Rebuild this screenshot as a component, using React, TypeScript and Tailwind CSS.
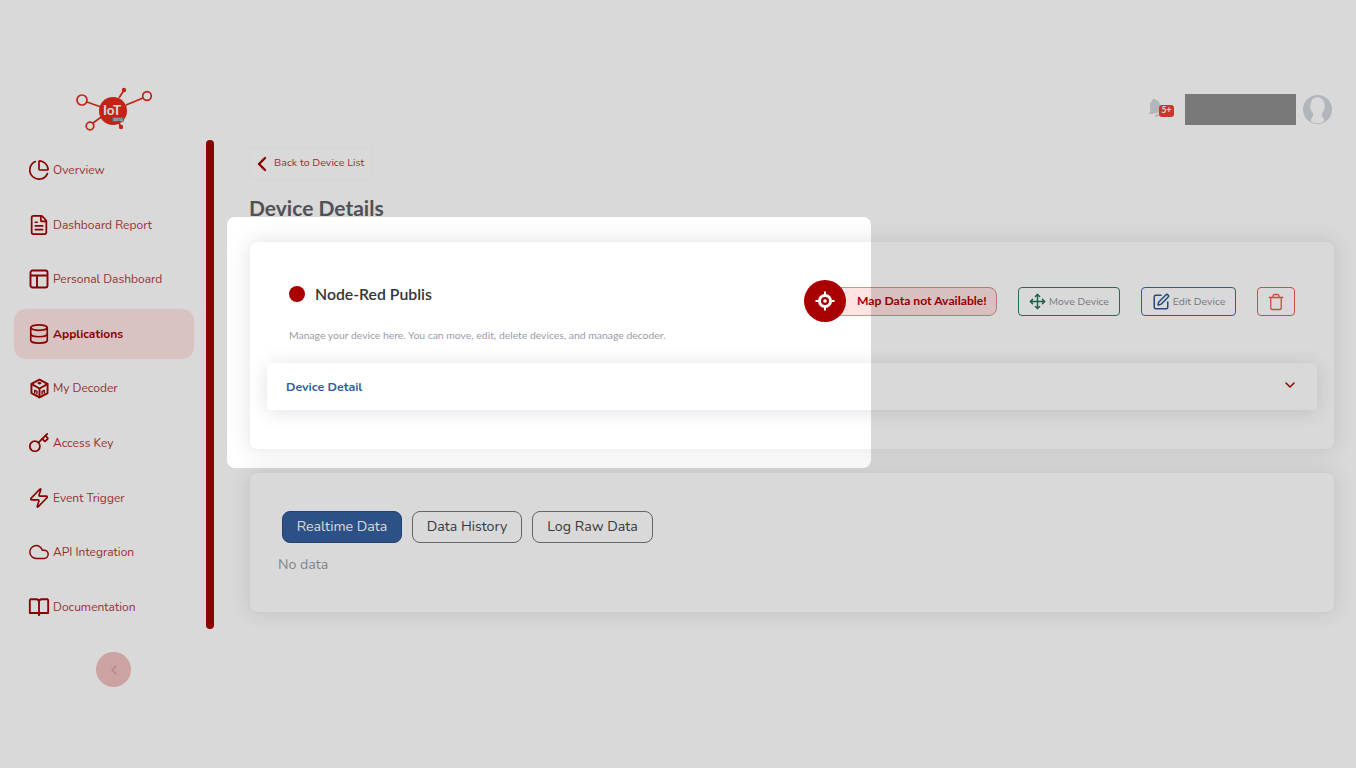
import React from "react";
import { ChevronLeft, ChevronDown, PieChart, FileText, Database, Key, Zap, Cloud, Move, SquarePen, Trash } from "lucide-react";

const nunito = "font-['Nunito','Lato','Noto_Sans',sans-serif]";

function PanelIcon() {
  return (
    <svg width="20" height="20" viewBox="0 0 20 20" fill="none" stroke="currentColor" strokeWidth="1.9">
      <rect x="1.5" y="1.5" width="17" height="17" rx="2" />
      <path d="M1.5 6.5h17M8 6.5v12" />
    </svg>
  );
}

function CubeIcon() {
  return (
    <svg width="21" height="21" viewBox="0 0 24 24" fill="none" stroke="currentColor" strokeWidth="2.2" strokeLinejoin="round" strokeLinecap="round">
      <path d="M12 1.800l9.200 5v10.400l-9.200 5-9.200-5V6.800z" />
      <path d="M3 7l9 5 9-5M12 12v9.800" />
      <path d="M10.500 5.800l1.500-.8 1.500.8-1.500.8z" strokeWidth="1.600" />
      <path d="M6.500 17v-3l2.500 1.400v3M15 18.400v-3l2.500-1.400v3" strokeWidth="1.600" />
    </svg>
  );
}

function BookIcon() {
  return (
    <svg width="22" height="22" viewBox="0 0 24 24" fill="none" stroke="currentColor" strokeWidth="2" strokeLinejoin="round">
      <path d="M2 3.500h7a3 3 0 0 1 3 3v15M22 3.500h-7a3 3 0 0 0-3 3" />
      <path d="M2 3.500v15h8a2 2 0 0 1 2 2 2 2 0 0 1 2-2h8v-15" />
    </svg>
  );
}

const items: { label: string; icon: React.ReactNode; active?: boolean }[] = [
  { label: "Overview", icon: <PieChart size={24} strokeWidth={1.8} /> },
  { label: "Dashboard Report", icon: <FileText size={24} strokeWidth={1.9} /> },
  { label: "Personal Dashboard", icon: <PanelIcon /> },
  { label: "Applications", icon: <Database size={24} strokeWidth={1.8} />, active: true },
  { label: "My Decoder", icon: <CubeIcon /> },
  { label: "Access Key", icon: <Key size={24} strokeWidth={1.9} /> },
  { label: "Event Trigger", icon: <Zap size={24} strokeWidth={1.8} /> },
  { label: "API Integration", icon: <Cloud size={26} strokeWidth={1.6} /> },
  { label: "Documentation", icon: <BookIcon /> },
];

function Logo() {
  return (
    <svg width="80" height="48" viewBox="0 0 80 48" fill="none">
      <g stroke="#e62a1a" strokeWidth="1.7">
        <circle cx="7" cy="15" r="5" />
        <circle cx="72" cy="11" r="4.300" />
        <circle cx="15" cy="41" r="3.800" />
        <path d="M12 17l14 5M51 20l17-7M18 38l11-8M44 13l5-8M44 38l2 4" />
      </g>
      <circle cx="49" cy="5" r="2.200" fill="#e62a1a" />
      <circle cx="46" cy="42" r="2.200" fill="#e62a1a" />
      <circle cx="38" cy="26" r="14" fill="#e62a1a" />
      <text x="37" y="29.500" textAnchor="middle" fill="#fff" fontSize="13.500" fontWeight="700" fontFamily="Lato, sans-serif">IoT</text>
      <rect x="37" y="32" width="12" height="4.500" fill="#777" />
      <text x="43" y="35.800" textAnchor="middle" fill="#ddd" fontSize="3.600" fontWeight="700" fontFamily="Lato, sans-serif">BETA</text>
    </svg>
  );
}

function Avatar() {
  return (
    <svg width="29" height="29" viewBox="0 0 30 30">
      <circle cx="15" cy="15" r="15" fill="#d0d5dd" />
      <ellipse cx="15" cy="11.500" rx="7.500" ry="9.500" fill="#fff" />
      <path d="M10 19c.8 2 .5 3.500-1 4.500l-1 3.500c4 3 10 3 14 0l-1-3.500c-1.500-1-1.800-2.500-1-4.500z" fill="#fff" />
    </svg>
  );
}

export default function App() {
  return (
    <div className={`relative flex w-[1356px] h-[768px] overflow-hidden bg-white ${nunito}`}>
      <aside className="w-[214px] shrink-0 pt-[85px] flex flex-col">
        <div className="h-[55px] pl-[75px]"><Logo /></div>
        <div className="flex h-[489px]">
          <nav className="flex-1 pl-[14px] pr-[12px] flex flex-col gap-[4.6px] pt-[5px]">
            {items.map((it) => (
              <div
                key={it.label}
                className={`flex items-center h-[50px] shrink-0 pl-[14px] gap-[3px] rounded-xl text-[#a30000] ${it.active ? "bg-[#ffe4e4] font-bold" : ""}`}
              >
                <span className="w-[22px] h-[24px] flex items-center justify-center">{it.icon}</span>
                <span className={`text-[12px] ${it.active ? "" : "opacity-80"}`}>{it.label}</span>
              </div>
            ))}
          </nav>
          <div className="w-[8px] rounded-full bg-[#a50000]" />
        </div>
        <div className="mt-[23px] ml-[96px] w-[35px] h-[35px] rounded-full bg-[#f0c0c0] flex items-center justify-center text-[#d99a9a]">
          <ChevronLeft size={16} />
        </div>
      </aside>

      <main className="flex-1 pl-[35px] pr-[21px] pt-[94px]">
        <div className="flex items-center justify-end h-[31px] pr-[3px]">
          <div className="relative w-[24px] h-[24px] mr-[11px]">
            <svg width="19" height="19" viewBox="0 0 24 24" fill="#d0d5dd" className="absolute left-[-4px] top-[0px] -rotate-12">
              <path d="M12 1c-1.500 0-2.500 1-2.500 2.200C6.500 4.500 5.500 7 5.500 10c0 4-1 6.500-3.500 9h20c-2.500-2.500-3.500-5-3.500-9 0-3-1-5.500-4-6.800C14.500 2 13.500 1 12 1zM9 21a3 3 0 0 0 6 0z" />
            </svg>
            <span className="absolute left-[9px] top-[7px] w-[15px] h-[12px] rounded-[3px] bg-[#ef4136] text-white text-[8.5px] font-bold flex items-center justify-center font-['Lato',sans-serif]">5+</span>
          </div>
          <div className="w-[111px] h-[31px] bg-[#8f8f8f] mr-[7px]" />
          <Avatar />
        </div>

        <div className="mt-[22px] flex w-[124px] items-center h-[33px] rounded border border-[#fafafa] text-[#a30000]">
          <ChevronLeft size={24} strokeWidth={2.4} className="shrink-0" />
          <span className="text-[10.7px] opacity-80 whitespace-nowrap">Back to Device List</span>
        </div>

        <h1 className="mt-[12px] h-[49px] text-[21px] leading-[32px] font-bold font-['Lato',sans-serif] text-[#5e6068]">Device Details</h1>

        <section className="relative h-[209px] rounded-lg bg-white border border-[#f1f1f4] shadow-[0_0_22px_rgba(20,20,50,0.11)] px-[17px] pt-[37px]">
          <div className="flex items-start justify-between pl-[22px] pr-[22px] font-['Lato',sans-serif]">
            <div>
              <div className="flex items-center gap-[10px] h-[30px]">
                <span className="w-[16px] h-[16px] rounded-full bg-[#a80000]" />
                <span className="text-[15.8px] font-semibold text-[#33343a]">Node-Red Publis</span>
              </div>
              <p className="mt-[18px] text-[10.4px] leading-[16px] text-[#9a9ba6]">Manage your device here. You can move, edit, delete devices, and manage decoder.</p>
            </div>
            <div className="flex items-start mt-[1px]">
              <div className="relative flex items-center mr-[21px]">
                <span className="relative z-10 w-[42px] h-[42px] -mr-[6px] rounded-full bg-[#a80000] flex items-center justify-center">
                  <svg width="24" height="24" viewBox="0 0 24 24" fill="none" stroke="#fff">
                    <circle cx="12" cy="12" r="5.500" strokeWidth="3" />
                    <circle cx="12" cy="12" r="1.800" fill="#fff" stroke="none" />
                    <path d="M12 2.500v4M12 17.500v4M2.500 12h4M17.500 12h4" strokeWidth="2" />
                  </svg>
                </span>
                <span className="h-[29px] w-[157px] pl-[16px] flex items-center rounded-r-lg border border-[#e08a8a] bg-[#ffe2e2] text-[#a80000] text-[12.2px] font-bold whitespace-nowrap">Map Data not Available!</span>
              </div>
              <div className={`flex items-center h-[29px] w-[102px] justify-center gap-[3px] rounded border border-[#2e7d5b] text-[#8a8d99] text-[10.5px] mt-[7px] mr-[21px] ${nunito}`}>
                <Move size={17} className="text-[#1f7050]" strokeWidth={2} />Move Device
              </div>
              <div className={`flex items-center h-[29px] w-[95px] justify-center gap-[3px] rounded border border-[#3b6bb0] text-[#8a8d99] text-[10.5px] mt-[7px] mr-[21px] ${nunito}`}>
                <SquarePen size={18} className="text-[#2c5696]" strokeWidth={2} />Edit Device
              </div>
              <div className="flex items-center h-[29px] w-[38px] justify-center rounded border border-[#ee5c50] text-[#ee5c50] mt-[7px]">
                <Trash size={18} strokeWidth={1.8} />
              </div>
            </div>
          </div>
          <div className="mt-[20px] h-[47px] rounded bg-white shadow-[0_2px_20px_rgba(20,20,50,0.12)] flex items-center justify-between pl-[19px] pr-[19px]">
            <span className="text-[12.4px] font-bold text-[#345d9d] pt-[2px]">Device Detail</span>
            <ChevronDown size={16} strokeWidth={2.2} className="text-[#a80000] mb-[3px]" />
          </div>
        </section>

        <section className="mt-[22px] h-[141px] rounded-lg bg-white border border-[#f1f1f4] shadow-[0_0_22px_rgba(20,20,50,0.11)] pl-[28px] pt-[38px]">
          <div className="flex gap-[10px] pl-[4px]">
            <span className="h-[32px] w-[120px] rounded-lg bg-[#34609f] border border-[#2b4f86] text-white text-[14.2px] flex items-center justify-center">Realtime Data</span>
            <span className="h-[32px] w-[110px] rounded-lg border border-[#777] text-[#444] text-[14.2px] flex items-center justify-center">Data History</span>
            <span className="h-[32px] w-[121px] rounded-lg border border-[#777] text-[#444] text-[14.2px] flex items-center justify-center">Log Raw Data</span>
          </div>
          <p className="mt-[12px] text-[14.2px] leading-[20px] text-[#9a9ba6]">No data</p>
        </section>
      </main>

      <div className="absolute left-[227px] top-[217px] w-[644px] h-[251px] rounded-lg shadow-[0_0_0_2000px_rgba(0,0,0,0.15)] pointer-events-none" />
    </div>
  );
}
